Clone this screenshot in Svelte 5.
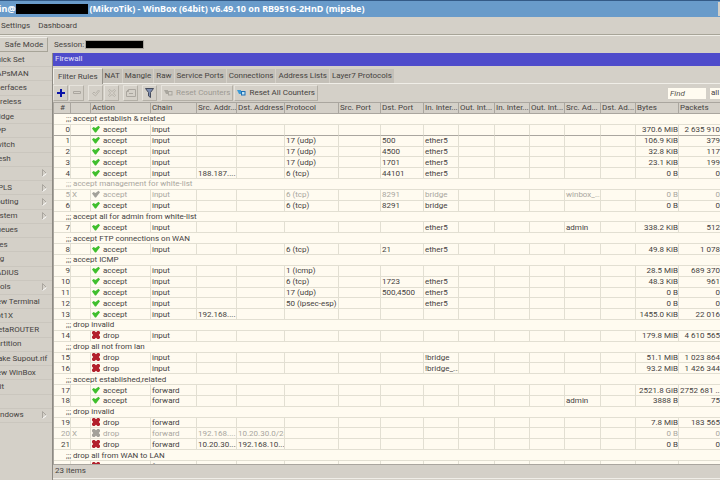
<script>
  const menu = [
    'Quick Set', 'CAPsMAN', 'Interfaces', 'Wireless', 'Bridge', 'PPP', 'Switch', 'Mesh', 'IP',
    'MPLS', 'Routing', 'System', 'Queues', 'Files', 'Log', 'RADIUS', 'Tools', 'New Terminal',
    'Dot1X', 'MetaROUTER', 'Partition', 'Make Supout.rif', 'New WinBox', 'Exit', '', 'Windows'
  ];
  const submenus = ['IP', 'MPLS', 'Routing', 'System', 'Tools', 'Windows'];

  const tabs = [
    'Filter Rules', 'NAT', 'Mangle', 'Raw', 'Service Ports',
    'Connections', 'Address Lists', 'Layer7 Protocols'
  ];
  let activeTab = $state('Filter Rules');
  let find = $state('');

  const columns = [
    '#', '', 'Action', 'Chain', 'Src. Addr...', 'Dst. Address', 'Protocol', 'Src. Port',
    'Dst. Port', 'In. Inter...', 'Out. Int...', 'In. Inter...', 'Out. Int...', 'Src. Ad...',
    'Dst. Ad...', 'Bytes', 'Packets'
  ];

  const rule = (n, action, chain, bytes, packets, rest = {}) => ({ n, action, chain, bytes, packets, ...rest });

  const rows = [
    { comment: 'accept establish & related' },
    rule(0, 'accept', 'input', '370.6 MiB', '2 635 910', { selected: true }),
    rule(1, 'accept', 'input', '106.9 KiB', '379', { proto: '17 (udp)', port: '500', iface: 'ether5' }),
    rule(2, 'accept', 'input', '32.8 KiB', '117', { proto: '17 (udp)', port: '4500', iface: 'ether5' }),
    rule(3, 'accept', 'input', '23.1 KiB', '199', { proto: '17 (udp)', port: '1701', iface: 'ether5' }),
    rule(4, 'accept', 'input', '0 B', '0', { src: '188.187....', proto: '6 (tcp)', port: '44101', iface: 'ether5' }),
    { comment: 'accept management for white-list', disabled: true },
    rule(5, 'accept', 'input', '0 B', '0', { proto: '6 (tcp)', port: '8291', iface: 'bridge', list: 'winbox_...', disabled: true }),
    rule(6, 'accept', 'input', '0 B', '0', { proto: '6 (tcp)', port: '8291', iface: 'bridge' }),
    { comment: 'accept all for admin from white-list' },
    rule(7, 'accept', 'input', '338.2 KiB', '512', { iface: 'ether5', list: 'admin' }),
    { comment: 'accept FTP connections on WAN' },
    rule(8, 'accept', 'input', '49.8 KiB', '1 078', { proto: '6 (tcp)', port: '21', iface: 'ether5' }),
    { comment: 'accept ICMP' },
    rule(9, 'accept', 'input', '28.5 MiB', '689 370', { proto: '1 (icmp)' }),
    rule(10, 'accept', 'input', '48.3 KiB', '961', { proto: '6 (tcp)', port: '1723', iface: 'ether5' }),
    rule(11, 'accept', 'input', '0 B', '0', { proto: '17 (udp)', port: '500,4500', iface: 'ether5' }),
    rule(12, 'accept', 'input', '0 B', '0', { proto: '50 (ipsec-esp)', iface: 'ether5' }),
    rule(13, 'accept', 'input', '1455.0 KiB', '22 016', { src: '192.168....' }),
    { comment: 'drop invalid' },
    rule(14, 'drop', 'input', '179.8 MiB', '4 610 565'),
    { comment: 'drop all not from lan' },
    rule(15, 'drop', 'input', '51.1 MiB', '1 023 864', { iface: '!bridge' }),
    rule(16, 'drop', 'input', '93.2 MiB', '1 426 344', { iface: '!bridge_...' }),
    { comment: 'accept established,related' },
    rule(17, 'accept', 'forward', '2521.8 GiB', '2752 681 ...'),
    rule(18, 'accept', 'forward', '3888 B', '75', { list: 'admin' }),
    { comment: 'drop invalid' },
    rule(19, 'drop', 'forward', '7.8 MiB', '183 565'),
    rule(20, 'drop', 'forward', '0 B', '0', { src: '192.168....', dst: '10.20.30.0/24', disabled: true }),
    rule(21, 'drop', 'forward', '0 B', '0', { src: '10.20.30....', dst: '192.168.10....' }),
    { comment: 'drop all from WAN to LAN' },
    rule(22, 'drop', 'forward', '0 B', '0', { iface: 'ether5' })
  ];
</script>

<div class="winbox">
  <header class="titlebar">
    <span class="user">admin@</span>
    <span class="redacted host"></span>
    <span>(MikroTik) - WinBox (64bit) v6.49.10 on RB951G-2HnD (mipsbe)</span>
    <span class="window-btn"></span>
  </header>

  <nav class="menubar">
    <a href="#settings">Settings</a>
    <a href="#dashboard">Dashboard</a>
  </nav>

  <div class="session">
    <button class="safe-mode">Safe Mode</button>
    <span class="session-label">Session:</span>
    <span class="redacted address"></span>
  </div>

  <div class="body">
    <nav class="sidebar">
      {#each menu as item}
        {#if item}
          <a href="#menu">
            <span class="menu-label">{item}</span>
            {#if submenus.includes(item)}
              <svg width="5" height="8" viewBox="0 0 5 8">
                <path d="M.5 7.5V.5L4.5 4.5" fill="none" stroke="#aaa69f" />
                <path d="M.5 7.5L4.5 4.5" fill="none" stroke="#fff" />
              </svg>
            {/if}
          </a>
        {:else}
          <span class="spacer"></span>
        {/if}
      {/each}
    </nav>

    <main class="panel">
      <h1>Firewall</h1>

      <div class="tabs">
        {#each tabs as tab}
          <button class="tab" class:active={tab === activeTab} onclick={() => (activeTab = tab)}>{tab}</button>
        {/each}
      </div>

      <div class="toolbar">
        <button class="tool" aria-label="Add">
          <svg width="8" height="8" viewBox="0 0 8 8"><path d="M4 0v8M0 4h8" stroke="#0a14a8" stroke-width="2" /></svg>
        </button>
        <button class="tool" aria-label="Remove">
          <svg width="8" height="8" viewBox="0 0 8 8"><path d="M.5 2.5h7v2h-7z" fill="#d4d0c8" stroke="#aaa69f" /></svg>
        </button>
        <span class="gap"></span>
        <button class="tool" aria-label="Enable">
          <svg width="8" height="8" viewBox="0 0 8 8"><path d="M.5 4.5L2 3l1.5 1.5L6.5 1l1 1-4 5z" fill="none" stroke="#b7b3ab" /></svg>
        </button>
        <button class="tool" aria-label="Disable">
          <svg width="8" height="8" viewBox="0 0 8 8"><path d="M.5 1.5l1-1L4 2.5l2.5-2 1 1L5.5 4l2 2.5-1 1L4 5.5l-2.5 2-1-1L2.5 4z" fill="none" stroke="#b7b3ab" /></svg>
        </button>
        <span class="gap"></span>
        <button class="tool" aria-label="Comment">
          <svg width="10" height="8" viewBox="0 0 10 8"><path d="M2.5.5h7v7h-9v-5zM2.5.5v2h-2M3 4.5h4" fill="none" stroke="#aaa69f" /></svg>
        </button>
        <span class="gap"></span>
        <button class="tool" aria-label="Filter">
          <svg width="9" height="10" viewBox="0 0 9 10">
            <path d="M.5.5h8l-3 4v5l-2-1.5V4.5z" fill="#7c8cb0" stroke="#444b5c" />
          </svg>
        </button>
        <span class="gap"></span>
        <button class="wide reset" disabled>
          <svg width="9" height="6" viewBox="0 0 9 6">
            <path d="M0 0h4v4H2z" fill="#a9a69e" />
            <rect x="4.5" y="1.5" width="3.5" height="3.5" fill="#d4d0c8" stroke="#a9a69e" />
          </svg>
          Reset Counters
        </button>
        <button class="wide">
          <svg width="9" height="6" viewBox="0 0 9 6">
            <path d="M0 0h4v4H2z" fill="#3b9ad6" />
            <rect x="4.5" y="1.5" width="3.5" height="3.5" fill="#bfe4f5" stroke="#1d6fb4" />
          </svg>
          Reset All Counters
        </button>
        <input class="find" type="text" placeholder="Find" aria-label="Find" bind:value={find} />
        <select aria-label="Chain">
          <option>all</option>
        </select>
      </div>

      <div class="grid">
        <table>
          <colgroup>
            {#each columns as _, i}
              <col class="c{i}" />
            {/each}
          </colgroup>
          <thead>
            <tr>
              {#each columns as column}
                <th>{column}</th>
              {/each}
            </tr>
          </thead>
          <tbody>
            {#each rows as row}
              {#if row.comment}
                <tr class:disabled={row.disabled}>
                  <td colspan="17"><span class="marks">;;;</span>{row.comment}</td>
                </tr>
              {:else}
                <tr class:disabled={row.disabled} class:selected={row.selected}>
                  <td class="num">{row.n}</td>
                  <td>{row.disabled ? 'X' : ''}</td>
                  <td class="action">
                    {#if row.action === 'accept'}
                      <svg width="8" height="8" viewBox="0 0 8 8">
                        <path d="M0 3.5L1.5 2l2 1 3-2.2L8 2.3 4 7.5H3z" fill={row.disabled ? '#a3a19a' : '#3fbf2d'} />
                      </svg>
                    {:else}
                      <svg width="8" height="8" viewBox="0 0 8 8">
                        <path
                          d="M0 1l1-1h1.5L4 1.3 5.5 0H7l1 1v1.5L6.8 4 8 5.5V7L7 8H5.5L4 6.7 2.5 8H1L0 7V5.5L1.2 4 0 2.5z"
                          fill={row.disabled ? '#a3a19a' : '#b3202c'}
                        />
                      </svg>
                    {/if}
                    {row.action}
                  </td>
                  <td>{row.chain}</td>
                  <td>{row.src ?? ''}</td>
                  <td>{row.dst ?? ''}</td>
                  <td>{row.proto ?? ''}</td>
                  <td></td>
                  <td>{row.port ?? ''}</td>
                  <td>{row.iface ?? ''}</td>
                  <td></td>
                  <td></td>
                  <td></td>
                  <td>{row.list ?? ''}</td>
                  <td></td>
                  <td class="right">{row.bytes}</td>
                  <td class="right">{row.packets}</td>
                </tr>
              {/if}
            {/each}
          </tbody>
        </table>
      </div>

      <footer>23 items</footer>
    </main>
  </div>
</div>

<style>
  .winbox {
    display: flex;
    flex-direction: column;
    height: 100vh;
    overflow: hidden;
    background: #d4d0c8;
    color: #45423e;
    font-family: Roboto, 'Liberation Sans', sans-serif;
    font-size: 8px;
    line-height: 10px;
    white-space: nowrap;
  }

  button,
  input,
  select {
    margin: 0;
    padding: 0;
    font: inherit;
    color: inherit;
    border-radius: 0;
  }

  a {
    color: inherit;
    text-decoration: none;
  }

  .titlebar {
    display: flex;
    align-items: center;
    flex-shrink: 0;
    gap: 1px;
    height: 17px;
    box-sizing: border-box;
    border-top: 1px solid #345a86;
    background: #699bca;
    color: #fff;
    font-family: 'Noto Sans', 'Open Sans', sans-serif;
    font-size: 9px;
    font-weight: bold;
  }

  .user {
    margin-left: -21px;
  }

  .redacted {
    flex-shrink: 0;
    background: #000;
  }

  .host {
    width: 72px;
    height: 10px;
  }

  .window-btn {
    width: 2px;
    height: 14px;
    margin-left: auto;
    background: #d4d0c8;
  }

  .menubar {
    display: flex;
    align-items: center;
    flex-shrink: 0;
    gap: 8px;
    height: 17px;
    padding-left: 1px;
    border-bottom: 1px solid #a7a498;
  }

  .session {
    display: flex;
    align-items: center;
    flex-shrink: 0;
    height: 17px;
    border-top: 1px solid #f0eee8;
  }

  .safe-mode {
    width: 48px;
    height: 15px;
    padding-left: 1px;
    border: 1px solid #f0eee8;
    border-right-color: #a7a498;
    border-bottom-color: #a7a498;
    border-left: 0;
    background: #d4d0c8;
  }

  .session-label {
    padding: 0 1px 0 6px;
  }

  .address {
    width: 57px;
    height: 7px;
    border: 1px solid #aaa69f;
  }

  .body {
    display: flex;
    flex: 1;
    min-height: 0;
  }

  .sidebar {
    display: grid;
    grid-template-rows: repeat(30, 1fr);
    flex-shrink: 0;
    width: 52px;
    border-right: 1px solid #8d8a83;
  }

  .sidebar a,
  .spacer {
    display: flex;
    align-items: center;
    justify-content: space-between;
    min-height: 0;
    padding-right: 5px;
    border-bottom: 1px solid #cac6be;
  }

  .menu-label {
    margin-left: -9px;
  }

  .panel {
    display: flex;
    flex-direction: column;
    flex: 1;
    min-width: 0;
  }

  h1 {
    margin: 0;
    padding: 1px 2px 2px;
    background: #4e4bcb;
    color: #e4e3f8;
    font-size: 8px;
    font-weight: normal;
    line-height: 10px;
  }

  .tabs {
    display: flex;
    align-items: flex-end;
    height: 17px;
    border-bottom: 1px solid #f0eee8;
  }

  .tab {
    height: 14px;
    padding: 0 2px;
    border: 0;
    border-right: 1px solid #d4d0c8;
    background: #c4c0b8;
  }

  .tab.active {
    height: 16px;
    margin-bottom: -1px;
    padding: 0 4px;
    border-top: 1px solid #f0eee8;
    border-left: 1px solid #f0eee8;
    border-right: 1px solid #96938b;
    background: #d4d0c8;
  }

  .toolbar {
    display: flex;
    align-items: center;
    height: 18px;
    gap: 1px;
  }

  .tool,
  .wide {
    display: flex;
    align-items: center;
    justify-content: center;
    flex-shrink: 0;
    height: 16px;
    border: 1px solid #e6e3dc;
    border-right-color: #b3afa6;
    border-bottom-color: #b3afa6;
    background: #d4d0c8;
  }

  .tool {
    width: 15px;
  }

  .gap {
    width: 2px;
  }

  .wide {
    gap: 3px;
    padding: 0 2px;
  }

  .reset {
    color: #9d9a93;
  }

  .find {
    width: 38px;
    height: 11px;
    margin-left: auto;
    padding: 0 2px;
    box-sizing: border-box;
    border: 0;
    background: #fffbf0;
  }

  .find::placeholder {
    color: #55524d;
    font-style: italic;
    opacity: 1;
  }

  select {
    appearance: none;
    width: 10px;
    height: 11px;
    margin-left: 3px;
    padding-left: 1px;
    border: 0;
    background: #fffbf0;
  }

  .grid {
    flex: 1;
    min-height: 0;
    overflow: hidden;
    border-left: 1px solid #aaa69f;
    background: #fffbf0;
  }

  /* the last rule stays half hidden behind the status bar */
  table {
    width: 100%;
    height: calc(100% + 8px);
    table-layout: fixed;
    border-collapse: separate;
    border-spacing: 0;
  }

  .c0 { width: 17px; }
  .c1 { width: 20px; }
  .c2 { width: 60px; }
  .c3 { width: 46px; }
  .c4 { width: 40px; }
  .c5 { width: 48px; }
  .c6 { width: 54px; }
  .c7 { width: 42px; }
  .c8 { width: 43px; }
  .c9 { width: 35px; }
  .c10 { width: 36px; }
  .c11 { width: 35px; }
  .c12 { width: 35px; }
  .c13 { width: 36px; }
  .c14 { width: 35px; }
  .c15 { width: 43px; }

  th,
  td {
    padding: 0 0 0 1px;
    overflow: hidden;
    line-height: 9px;
    text-align: left;
    font-weight: normal;
    border-right: 1px solid #e2dfd2;
    border-bottom: 1px solid #e2dfd2;
  }

  th {
    line-height: 10px;
    background: #d4d0c8;
    border-right-color: #aaa69f;
    border-bottom-color: #aaa69f;
    border-top: 1px solid #aaa69f;
  }

  th:first-child {
    text-align: center;
  }

  th:last-child,
  td:last-child {
    border-right: 0;
  }

  td.num,
  td.right {
    text-align: right;
  }

  .action svg {
    vertical-align: -1px;
    margin-right: 1px;
  }

  .selected td {
    border-bottom-color: #aaa69f;
  }

  .marks {
    margin: 0 2px 0 11px;
  }

  .disabled {
    color: #a9a69e;
  }

  footer {
    height: 12px;
    margin-bottom: 1px;
    padding: 1px 2px 0;
    border-top: 1px solid #aaa69f;
    border-bottom: 1px solid #f0eee8;
  }
</style>
